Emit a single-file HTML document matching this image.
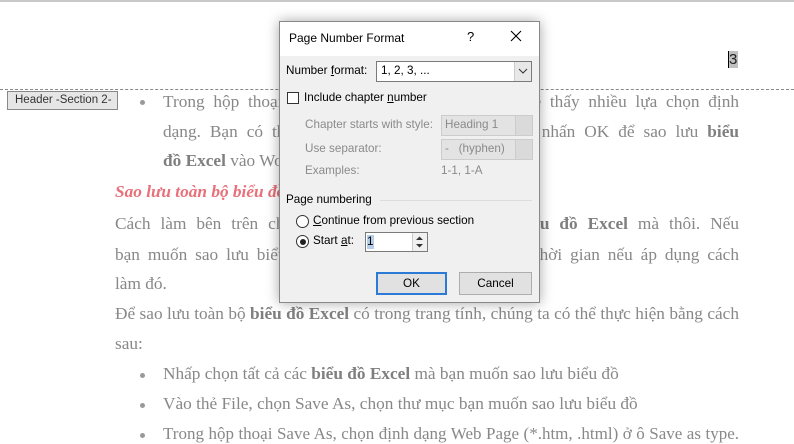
<!DOCTYPE html>
<html><head><meta charset="utf-8"><style>
*{margin:0;padding:0;box-sizing:border-box}
body{width:794px;height:441px;overflow:hidden;background:#fff;position:relative;font-family:"Liberation Serif",serif;}
.t{position:absolute;font-size:17.3px;color:#888;white-space:nowrap;line-height:20px}
.j{text-align:justify;text-align-last:justify}
.t b{color:#7f7f7f}
.dot{position:absolute;width:5px;height:5px;border-radius:50%;background:#999}
.d{position:absolute;font-family:"Liberation Sans",sans-serif;font-size:11.7px;color:#000;white-space:nowrap;line-height:14px}
.g{color:#8a8a8a}
.box{position:absolute;border:1px solid #7a7a7a;background:#fff}
.dis{position:absolute;border:1px solid #ccc;background:#e3e3e3}
.arr{position:absolute;right:0;top:0;bottom:0;width:17px;background:#e6e6e6;border-left:1px solid #ccc}
u{text-decoration:underline}
</style></head><body>
<div style="position:absolute;left:0;top:0;width:794px;height:2px;background:#c8c8c8"></div>
<div style="position:absolute;left:0;top:89px;width:794px;border-top:1px dashed #888"></div>
<div style="position:absolute;left:7px;top:91px;width:111px;height:19px;background:#e6e6e6;border:1px solid #888;font-family:'Liberation Sans',sans-serif;font-size:11.5px;color:#333;line-height:17px;padding-left:7px">Header -Section 2-</div>
<div style="position:absolute;left:728px;top:51px;width:10px;height:17px;background:#c0c0c0;border-left:1px solid #000;font-family:'Liberation Sans',sans-serif;font-size:15px;line-height:17px;color:#222">3</div>

<div class="dot" style="left:140px;top:100px"></div>
<div class="t j" style="left:163px;top:92px;width:576px">Trong hộp thoại Save As, chọn định dạng, bạn sẽ thấy nhiều lựa chọn định</div>
<div class="t j" style="left:163px;top:122px;width:576px">dạng. Bạn có thể chọn Web Page rồi sau đó rồi nhấn OK để sao lưu <b>biểu</b></div>
<div class="t" style="left:163px;top:151px"><b>đồ Excel</b> vào Word.</div>
<div class="t" style="left:115px;top:182px;color:#e8707a;font-weight:bold;font-style:italic">Sao lưu toàn bộ biểu đồ</div>
<div class="t j" style="left:115px;top:214px;width:624px">Cách làm bên trên chỉ áp dụng cho từng biểu đồ, <b>biểu đồ Excel</b> mà thôi. Nếu</div>
<div class="t j" style="left:115px;top:245px;width:624px">bạn muốn sao lưu biểu đồ thì sẽ rất mất thời gian mất thời gian nếu áp dụng cách</div>
<div class="t" style="left:115px;top:274px">làm đó.</div>
<div class="t j" style="left:115px;top:304px;width:624px">Để sao lưu toàn bộ <b>biểu đồ Excel</b> có trong trang tính, chúng ta có thể thực hiện bằng cách</div>
<div class="t" style="left:115px;top:334px">sau:</div>
<div class="dot" style="left:140px;top:373px"></div>
<div class="t" style="left:163px;top:364px">Nhấp chọn tất cả các <b>biểu đồ Excel</b> mà bạn muốn sao lưu biểu đồ</div>
<div class="dot" style="left:140px;top:403px"></div>
<div class="t" style="left:163px;top:394px">Vào thẻ File, chọn Save As, chọn thư mục bạn muốn sao lưu biểu đồ</div>
<div class="dot" style="left:140px;top:433px"></div>
<div class="t j" style="left:163px;top:424px;width:576px;font-size:17px">Trong hộp thoại Save As, chọn định dạng Web Page (*.htm, .html) ở ô Save as type.</div>

<!-- dialog -->
<div style="position:absolute;left:279px;top:21px;width:261px;height:282px;background:#f0f0f0;border:1px solid #888;box-shadow:0 0 12px rgba(0,0,0,.35)">
<div style="position:absolute;left:0;top:0;width:259px;height:34px;background:#fff"></div>
</div>
<div class="d" style="left:289px;top:31px;font-size:12px">Page Number Format</div>
<div class="d" style="left:467px;top:30px;font-size:13px">?</div>
<svg style="position:absolute;left:510px;top:30px" width="12" height="12"><path d="M1 1L11 11M11 1L1 11" stroke="#000" stroke-width="1.1"/></svg>

<div class="d" style="left:286px;top:64px">Number <u>f</u>ormat:</div>
<div class="box" style="left:376px;top:61px;width:156px;height:21px"><div class="arr" style="background:#e8e8e8"></div></div>
<div class="d" style="left:381px;top:64px">1, 2, 3, ...</div>
<svg style="position:absolute;left:518px;top:68px" width="10" height="6"><path d="M1 1L5 5L9 1" stroke="#333" fill="none"/></svg>

<div style="position:absolute;left:287px;top:92px;width:12px;height:12px;border:1px solid #333;background:#fff"></div>
<div class="d" style="left:304px;top:91px">Include chapter <u>n</u>umber</div>
<div class="d g" style="left:305px;top:118px">Chapter starts with style:</div>
<div class="dis" style="left:441px;top:115px;width:92px;height:21px"><div class="arr" style="background:#dadada"></div></div>
<div class="d g" style="left:445px;top:118px">Heading 1</div>
<div class="d g" style="left:305px;top:142px">Use separator:</div>
<div class="dis" style="left:441px;top:139px;width:92px;height:21px"><div class="arr" style="background:#dadada"></div></div>
<div class="d g" style="left:445px;top:142px">-&nbsp;&nbsp; (hyphen)</div>
<div class="d g" style="left:305px;top:164px">Examples:</div>
<div class="d g" style="left:441px;top:164px">1-1, 1-A</div>

<div class="d" style="left:286px;top:193px">Page numbering</div>
<div style="position:absolute;left:380px;top:200px;width:152px;height:1px;background:#ddd"></div>
<div style="position:absolute;left:296px;top:215px;width:13px;height:13px;border:1px solid #333;border-radius:50%;background:#fff"></div>
<div class="d" style="left:313px;top:214px"><u>C</u>ontinue from previous section</div>
<div style="position:absolute;left:296px;top:235px;width:13px;height:13px;border:1px solid #333;border-radius:50%;background:#fff"></div>
<div style="position:absolute;left:299.5px;top:238.5px;width:6px;height:6px;border-radius:50%;background:#222"></div>
<div class="d" style="left:313px;top:234px">Start <u>a</u>t:</div>
<div class="box" style="left:365px;top:232px;width:63px;height:20px"></div>
<div style="position:absolute;left:367px;top:235px;width:7px;height:14px;background:#b4cde8"></div>
<div class="d" style="left:367px;top:235px">1</div>
<div style="position:absolute;left:412px;top:233px;width:15px;height:18px;background:#f0f0f0;border-left:1px solid #ccc"></div>
<svg style="position:absolute;left:415px;top:235px" width="9" height="14"><path d="M1 5L4.5 1.5L8 5Z M1 9L4.5 12.5L8 9Z" fill="#333"/></svg>

<div style="position:absolute;left:376px;top:272px;width:71px;height:23px;border:2px solid #2a7ad6;background:#e1e1e1"></div>
<div class="d" style="left:376px;top:277px;width:71px;text-align:center">OK</div>
<div style="position:absolute;left:459px;top:272px;width:73px;height:23px;border:1px solid #adadad;background:#e1e1e1"></div>
<div class="d" style="left:459px;top:277px;width:73px;text-align:center">Cancel</div>
</body></html>
